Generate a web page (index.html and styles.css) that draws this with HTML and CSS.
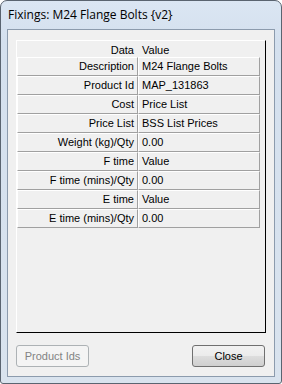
FILE: index.html
```html
<!DOCTYPE html>
<html lang="en">
<head>
  <meta charset="UTF-8" />
  <title>Fixings: M24 Flange Bolts {v2}</title>
  <link rel="stylesheet" href="styles.css">
</head>
<body>

<div class="window">
  <div class="titlebar">Fixings: M24 Flange Bolts {v2}</div>

  <div class="client">
    <div class="panel">
      <div class="grid">
        <div class="head label">Data</div>
        <div class="head value">Value</div>

        <div class="cell label">Description</div>
        <div class="cell value">M24 Flange Bolts</div>

        <div class="cell label">Product Id</div>
        <div class="cell value">MAP_131863</div>

        <div class="cell label">Cost</div>
        <div class="cell value">Price List</div>

        <div class="cell label">Price List</div>
        <div class="cell value">BSS List Prices</div>

        <div class="cell label">Weight (kg)/Qty</div>
        <div class="cell value">0.00</div>

        <div class="cell label">F time</div>
        <div class="cell value">Value</div>

        <div class="cell label">F time (mins)/Qty</div>
        <div class="cell value">0.00</div>

        <div class="cell label">E time</div>
        <div class="cell value">Value</div>

        <div class="cell label">E time (mins)/Qty</div>
        <div class="cell value">0.00</div>
      </div>
    </div>

    <div class="buttons">
      <button class="btn" disabled>Product Ids</button>
      <button class="btn">Close</button>
    </div>
  </div>
</div>

</body>
</html>
```

FILE: styles.css
```css
html, body {
  margin: 0;
  padding: 0;
  background: #fff;
}
.window {
  width: 282px;
  height: 384px;
  box-sizing: border-box;
  border: 1px solid #5a6470;
  border-radius: 7px 7px 3px 3px;
  background: linear-gradient(#dbe6f3, #d4e0ee 40px, #d9e3ee);
  display: flex;
  flex-direction: column;
}
.titlebar {
  height: 28px;
  padding-left: 7px;
  font-family: "Open Sans", "Noto Sans", sans-serif;
  font-size: 12px;
  line-height: 28px;
  color: #000;
}
.client {
  margin: 0 6px 6px 6px;
  flex-grow: 1;
  background: #f0f0f0;
  border: 1px solid #8c9bad;
  padding: 10px 8px 0 8px;
  display: flex;
  flex-direction: column;
}
.panel {
  height: 293px;
  box-sizing: border-box;
  border-top: 1px solid #fff;
  border-left: 1px solid #fff;
  border-right: 1px solid #000;
  border-bottom: 1px solid #000;
}
.grid {
  display: grid;
  grid-template-columns: 121px 122px;
  font-family: "Liberation Sans", Arial, sans-serif;
  font-size: 11px;
  color: #000;
}
.head {
  height: 16px;
  line-height: 18px;
}
.cell {
  height: 17px;
  line-height: 17px;
  border-top: 1px solid #fff;
  border-left: 1px solid #fff;
  border-right: 1px solid #a0a0a0;
  border-bottom: 1px solid #a0a0a0;
  white-space: nowrap;
  overflow: hidden;
}
.label {
  text-align: right;
  padding-right: 3px;
}
.value {
  padding-left: 3px;
}
.head.label {
  padding-right: 4px;
}
.head.value {
  padding-left: 4px;
}
.buttons {
  margin-top: 12px;
  display: flex;
  justify-content: space-between;
  padding-right: 1px;
}
.btn {
  width: 73px;
  height: 22px;
  border: 1px solid #707070;
  border-radius: 3px;
  background: linear-gradient(#f2f2f2 0%, #ebebeb 50%, #dddddd 51%, #cfcfcf 100%);
  font-family: "Liberation Sans", Arial, sans-serif;
  font-size: 11px;
  color: #000;
  padding: 0;
}
.btn:disabled {
  border-color: #adb2b5;
  background: #f4f4f4;
  color: #838383;
}
```
